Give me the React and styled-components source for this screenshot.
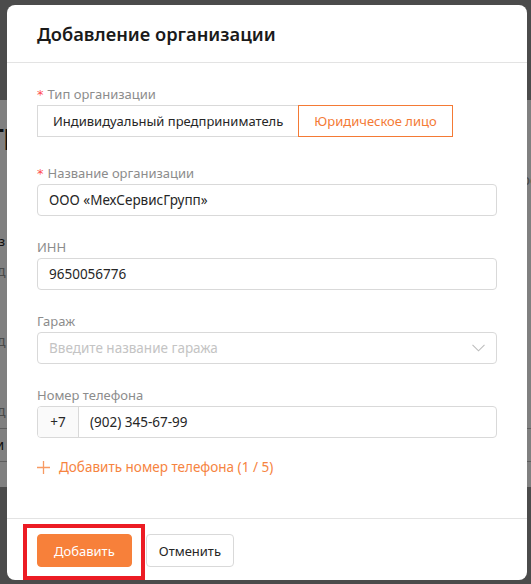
import React from "react";
import styled, { createGlobalStyle } from "styled-components";

const GlobalStyle = createGlobalStyle`
  html, body {
    margin: 0;
    padding: 0;
    height: 100%;
  }
  body {
    font-family: "Noto Sans", "Open Sans", sans-serif;
    font-size: 14px;
    color: rgba(0, 0, 0, 0.88);
  }
  #root {
    height: 100%;
  }
`;

const Screen = styled.div`
  position: relative;
  width: 531px;
  height: 584px;
  overflow: hidden;
  background: #4b4b4b;
`;

// the page that sits under the dark overlay
const Backdrop = styled.div`
  display: flex;
  flex-direction: column;
  height: 100%;
`;

const BackHeader = styled.div`
  height: 100px;
  flex: none;
`;

const BackContent = styled.div`
  height: 387px;
  background: #808080;
  overflow: hidden;
  display: flex;
  flex-direction: column;
  color: #0f0f0f;
`;

const BackRow = styled.div`
  margin-left: ${(p) => p.$shift || -40}px;
  margin-top: ${(p) => p.$top || 0}px;
  font-size: ${(p) => p.$size || 14}px;
  font-weight: ${(p) => (p.$bold ? 700 : 400)};
  color: ${(p) => (p.$muted ? "#4a4a4a" : "#0f0f0f")};
  line-height: ${(p) => p.$lh || 22}px;
  white-space: nowrap;
  border-top: ${(p) => (p.$line ? "1px solid #5e5e5e" : "none")};
  border-bottom: ${(p) => (p.$lineBottom ? "1px solid #5e5e5e" : "none")};
`;

const RightText = styled.div`
  position: absolute;
  right: -6px;
  top: 170px;
  color: #4a4a4a;
  font-size: 14px;
`;

const Modal = styled.div`
  position: absolute;
  left: 7px;
  top: 5px;
  width: 520px;
  height: 575px;
  background: #fff;
  border-radius: 8px;
  display: flex;
  flex-direction: column;
`;

const ModalHeader = styled.div`
  padding: 15px 30px 0;
  height: 58px;
  box-sizing: border-box;
  border-bottom: 1px solid #e3e3e3;
`;

const Title = styled.h2`
  margin: 0;
  font-size: 18.3px;
  font-weight: 600;
  line-height: 28px;
  color: #1a1a1a;
`;

const ModalBody = styled.div`
  flex: 1;
  padding: 20px 30px 0;
`;

const FormItem = styled.div`
  margin-bottom: ${(p) => p.$gap ?? 20}px;
`;

const Label = styled.div`
  height: 22px;
  line-height: 22px;
  color: #8c8c8c;
  font-size: 13px;

  span {
    color: #ff4d4f;
    margin-right: 4px;
    font-family: "DejaVu Sans", sans-serif;
    font-size: 13px;
  }
`;

const Segmented = styled.div`
  display: flex;
  height: 32px;
`;

const Segment = styled.div`
  height: 32px;
  box-sizing: border-box;
  padding: 0 15px;
  display: flex;
  align-items: center;
  font-size: 13px;
  border: 1px solid ${(p) => (p.$active ? "#f47a35" : "#d9d9d9")};
  color: ${(p) => (p.$active ? "#f47a35" : "#262626")};
  margin-left: ${(p) => (p.$active ? "-1px" : "0")};
  position: relative;
  z-index: ${(p) => (p.$active ? 1 : 0)};
`;

const Field = styled.div`
  height: 32px;
  box-sizing: border-box;
  border: 1px solid #d9d9d9;
  border-radius: 4px;
  display: flex;
  align-items: center;
  padding: 0 ${(p) => (p.$addon ? 0 : 11)}px;
  font-size: 13.5px;
  color: ${(p) => (p.$placeholder ? "#c4c4c4" : "#262626")};
  justify-content: space-between;
  overflow: hidden;
`;

const Addon = styled.div`
  width: 40px;
  height: 100%;
  flex: none;
  display: flex;
  align-items: center;
  justify-content: center;
  background: #fafafa;
  border-right: 1px solid #d9d9d9;
  color: #262626;
`;

const AddonValue = styled.div`
  flex: 1;
  padding: 0 11px;
`;

const AddLink = styled.div`
  display: flex;
  align-items: center;
  gap: 9px;
  margin-top: 18px;
  color: #f6843f;
  font-size: 13.5px;
  line-height: 22px;
`;

const ModalFooter = styled.div`
  height: 62px;
  box-sizing: border-box;
  border-top: 1px solid #e3e3e3;
  padding: 15px 30px 0;
  display: flex;
  gap: 14px;
  align-items: flex-start;
`;

const Highlight = styled.div`
  position: relative;
  display: flex;

  &::after {
    content: "";
    position: absolute;
    left: -14px;
    right: -13px;
    top: -10px;
    bottom: -13px;
    border: 4px solid #ec1c24;
    pointer-events: none;
  }
`;

const Button = styled.button`
  height: 33px;
  box-sizing: border-box;
  padding: 0 ${(p) => (p.$primary ? 16 : 12)}px;
  border-radius: 4px;
  font-family: inherit;
  font-size: 13px;
  border: 1px solid ${(p) => (p.$primary ? "#f7803a" : "#d9d9d9")};
  background: ${(p) => (p.$primary ? "#f7803a" : "#fff")};
  color: ${(p) => (p.$primary ? "#fff" : "#262626")};
  cursor: pointer;
`;

const Chevron = () => (
  <svg width="13" height="8" viewBox="0 0 13 8" fill="none">
    <path d="M0.5 0.8 L6.5 6.8 L12.5 0.8" stroke="#bdbdbd" strokeWidth="1.1" />
  </svg>
);

const Plus = () => (
  <svg width="13" height="13" viewBox="0 0 13 13" fill="none">
    <path d="M6.5 0 V13 M0 6.5 H13" stroke="#f79a63" strokeWidth="1.3" />
  </svg>
);

const App = () => {
  return (
    <>
      <GlobalStyle />
      <Screen>
        <Backdrop>
          <BackHeader />
          <BackContent>
            <BackRow $top={18} $size={26} $bold $lh={32} $shift={-62}>
              Центр
            </BackRow>
            <BackRow $top={20} $muted $shift={-42}>
              Все
            </BackRow>
            <BackRow $muted $shift={-46}>
              Рынок
            </BackRow>
            <BackRow $top={16} $size={13} $shift={-20}>
              Физ
            </BackRow>
            <BackRow $top={8} $muted $shift={-3}>
              д
            </BackRow>
            <BackRow $top={48} $muted $shift={-3}>
              д
            </BackRow>
            <BackRow $top={48} $muted $shift={-3}>
              д
            </BackRow>
            <BackRow $top={6} $line $lineBottom $lh={32} $shift={-20}>
              Сти
            </BackRow>
          </BackContent>
        </Backdrop>
        <RightText>ос</RightText>

        <Modal>
          <ModalHeader>
            <Title>Добавление организации</Title>
          </ModalHeader>
          <ModalBody>
            <FormItem $gap={25}>
              <Label>
                <span>*</span>Тип организации
              </Label>
              <Segmented>
                <Segment>Индивидуальный предприниматель</Segment>
                <Segment $active>Юридическое лицо</Segment>
              </Segmented>
            </FormItem>
            <FormItem>
              <Label>
                <span>*</span>Название организации
              </Label>
              <Field>ООО «МехСервисГрупп»</Field>
            </FormItem>
            <FormItem>
              <Label>ИНН</Label>
              <Field>9650056776</Field>
            </FormItem>
            <FormItem>
              <Label>Гараж</Label>
              <Field $placeholder>
                Введите название гаража
                <Chevron />
              </Field>
            </FormItem>
            <FormItem $gap={0}>
              <Label>Номер телефона</Label>
              <Field $addon>
                <Addon>+7</Addon>
                <AddonValue>(902) 345-67-99</AddonValue>
              </Field>
            </FormItem>
            <AddLink>
              <Plus />
              Добавить номер телефона (1 / 5)
            </AddLink>
          </ModalBody>
          <ModalFooter>
            <Highlight>
              <Button $primary>Добавить</Button>
            </Highlight>
            <Button>Отменить</Button>
          </ModalFooter>
        </Modal>
      </Screen>
    </>
  );
};

export default App;
